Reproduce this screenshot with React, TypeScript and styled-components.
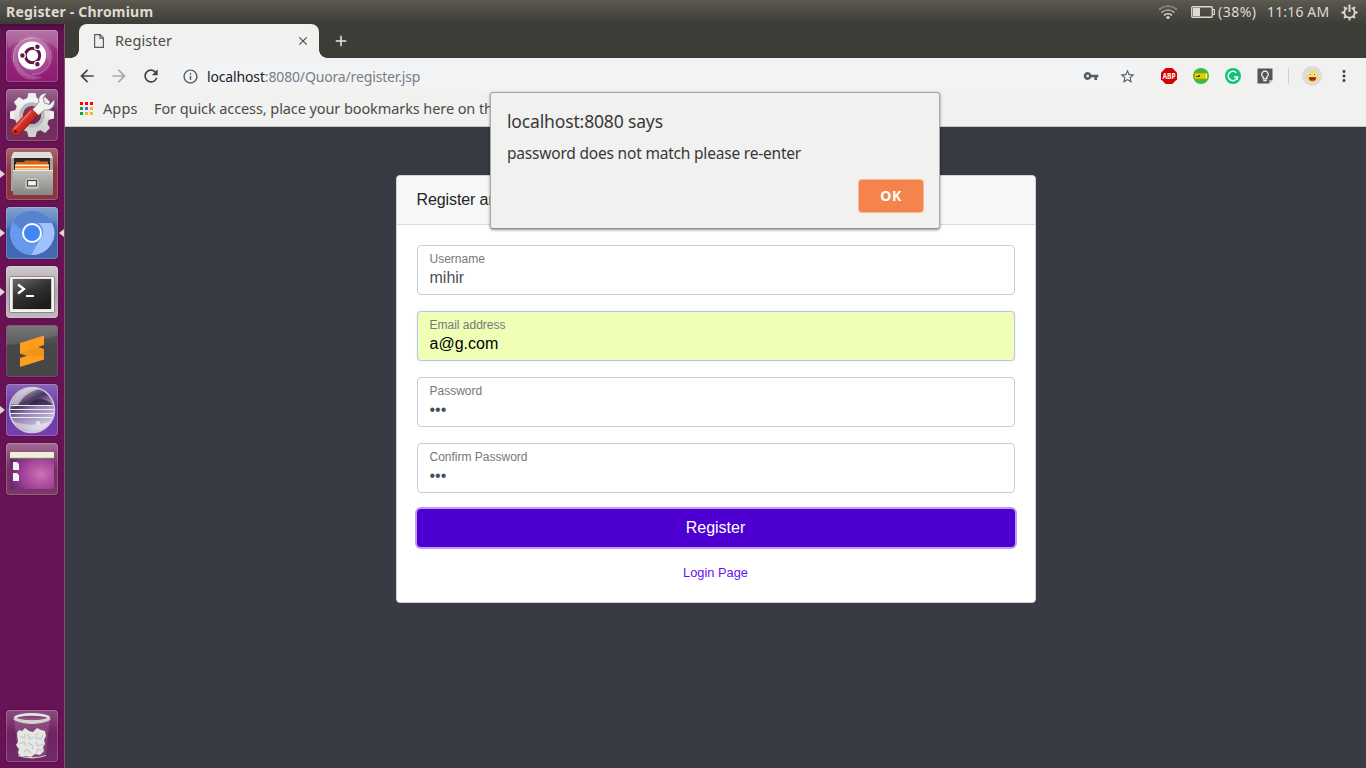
import React from 'react';
import styled, { createGlobalStyle, css } from 'styled-components';
import {
  MdArrowBack,
  MdArrowForward,
  MdRefresh,
  MdInfoOutline,
  MdVpnKey,
  MdStarBorder,
  MdMoreVert,
  MdClose,
  MdAdd,
} from 'react-icons/md';

const GlobalStyle = createGlobalStyle`
  * { box-sizing: border-box; }
  html, body { margin: 0; padding: 0; overflow: hidden; }
  body { font-family: 'Noto Sans', 'Open Sans', sans-serif; }
`;

const Desktop = styled.div`
  width: 1366px;
  height: 768px;
  display: flex;
  flex-direction: column;
  overflow: hidden;
  background: #383a44;
`;

/* ---------- system panel ---------- */

const Panel = styled.header`
  height: 24px;
  flex: none;
  display: flex;
  align-items: center;
  justify-content: space-between;
  padding: 0 8px 0 6px;
  background: linear-gradient(#5f5d50 0, #59564e 2px, #3d3c37 100%);
  color: #dfdbd2;
`;

const Label = styled.span<{ $size?: number; $track?: number; $color?: string; $weight?: number }>`
  white-space: nowrap;
  line-height: 20px;
  font-size: ${(p) => p.$size ?? 14}px;
  letter-spacing: ${(p) => p.$track ?? 0}px;
  font-weight: ${(p) => p.$weight ?? 400};
  ${(p) => p.$color && css`color: ${p.$color};`}
`;

const Indicators = styled.div`
  display: flex;
  align-items: center;
  svg { display: block; }
`;

const Battery = styled.div`
  display: flex;
  align-items: center;
  gap: 3px;
  width: 66px;
  margin: 0 10px 0 13px;
`;

const Clock = styled.div`
  width: 63px;
  margin-right: 11px;
  display: flex;
`;

/* ---------- launcher ---------- */

const Body = styled.div`
  flex: 1;
  min-height: 0;
  display: flex;
`;

const Launcher = styled.nav`
  width: 65px;
  flex: none;
  display: flex;
  flex-direction: column;
  justify-content: space-between;
  padding: 6px 0;
  background: linear-gradient(#470c3b 0, #65114f 7px, #691255 70px, #671355 100%);
  border-right: 1px solid #8a4a7c;
`;

const LauncherGroup = styled.div`
  display: flex;
  flex-direction: column;
  gap: 7px;
`;

const LauncherSlot = styled.div`
  height: 52px;
  display: grid;
  grid-template-columns: 6px 52px 6px;
  align-items: center;
`;

const Pip = styled.i<{ $side: 'left' | 'right'; $on?: boolean }>`
  width: 5px;
  height: 8px;
  justify-self: ${(p) => (p.$side === 'left' ? 'start' : 'end')};
  background: ${(p) => (p.$on ? '#ddd5da' : 'transparent')};
  clip-path: ${(p) =>
    p.$side === 'left' ? 'polygon(0 0, 100% 50%, 0 100%)' : 'polygon(100% 0, 0 50%, 100% 100%)'};
`;

const Tile = styled.div<{ $bg: string; $edge?: string }>`
  width: 52px;
  height: 52px;
  border-radius: 4px;
  overflow: hidden;
  background: ${(p) => p.$bg};
  box-shadow: inset 0 0 0 1px ${(p) => p.$edge ?? 'rgba(255,255,255,.2)'}, 0 0 2px rgba(30, 0, 25, 0.5);
  svg { display: block; }
`;

/* ---------- browser ---------- */

const Browser = styled.main`
  position: relative;
  flex: 1;
  min-width: 0;
  display: flex;
  flex-direction: column;
`;

const TabStrip = styled.div`
  height: 34px;
  flex: none;
  display: flex;
  align-items: center;
  padding-left: 14px;
  background: #3d3d38;
`;

const Tab = styled.div`
  position: relative;
  width: 240px;
  height: 34px;
  display: flex;
  align-items: center;
  padding: 0 9px 0 15px;
  background: #f1f1ef;
  border-radius: 8px 8px 0 0;
  color: #4b4b4b;
  &::before, &::after {
    content: '';
    position: absolute;
    bottom: 0;
    width: 8px;
    height: 8px;
  }
  &::before {
    left: -8px;
    background: radial-gradient(circle at 0 0, transparent 7.5px, #f1f1ef 8px);
  }
  &::after {
    right: -8px;
    background: radial-gradient(circle at 100% 0, transparent 7.5px, #f1f1ef 8px);
  }
`;

const TabTitle = styled.div`
  flex: 1;
  margin-left: 11px;
  padding-bottom: 2px;
  display: flex;
`;

const NewTab = styled.div`
  margin-left: 13px;
  display: flex;
  color: #e8e8e4;
`;

const Toolbar = styled.div`
  height: 37px;
  flex: none;
  display: flex;
  align-items: center;
  padding: 0 0 1px 12px;
  background: #f1f1ef;
  color: #444;
  svg { display: block; flex: none; }
`;

const NavButtons = styled.div`
  display: flex;
  gap: 12px;
  width: 97px;
`;

const Omnibox = styled.div`
  width: 970px;
  height: 28px;
  display: flex;
  align-items: center;
  padding: 0 8px 0 8px;
  border-radius: 14px;
  background: #f1f3f5;
  color: #5a5e63;
`;

const Url = styled.div`
  flex: 1;
  margin-left: 8px;
  padding-top: 2px;
  display: flex;
`;

const OmniActions = styled.div`
  display: flex;
  align-items: center;
  gap: 20px;
`;

const Extensions = styled.div`
  display: flex;
  align-items: center;
  gap: 16px;
  margin-left: 17px;
`;

const Divider = styled.div`
  width: 1px;
  height: 16px;
  margin: 0 13px 0 15px;
  background: #cfcfcd;
`;

const Avatar = styled.div`
  width: 20px;
  height: 20px;
  border-radius: 50%;
  display: grid;
  place-items: center;
  background: #dcdcdc;
  margin-right: 13px;
`;

const Bookmarks = styled.div`
  height: 32px;
  flex: none;
  display: flex;
  align-items: center;
  padding: 0 0 5px 15px;
  background: #f1f1ef;
  border-bottom: 1px solid #c4c5c4;
  color: #4b4b4b;
  > span, div > span { margin-bottom: 1px; }
`;

const AppsLink = styled.div`
  width: 74px;
  display: flex;
  align-items: center;
  gap: 10px;
`;

/* ---------- page ---------- */

const Page = styled.section`
  flex: 1;
  min-height: 0;
  display: flex;
  flex-direction: column;
  align-items: center;
  padding-top: 48px;
  background: #383a44;
  font-family: 'Liberation Sans', Arial, sans-serif;
`;

const Card = styled.div`
  width: 640px;
  height: 428px;
  background: #fff;
  border: 1px solid #d3d3d5;
  border-radius: 4px;
  overflow: hidden;
`;

const CardHeader = styled.div`
  height: 49px;
  padding: 12px 20px;
  line-height: 24px;
  font-size: 16px;
  letter-spacing: -0.1px;
  color: #212529;
  background: #f7f7f7;
  border-bottom: 1px solid #dadada;
`;

const Form = styled.form`
  padding: 20px;
  display: flex;
  flex-direction: column;
  gap: 16px;
`;

const Field = styled.label<{ $filled?: boolean }>`
  height: 50px;
  display: flex;
  flex-direction: column;
  padding: 4px 12px 0;
  border: 1px solid ${(p) => (p.$filled ? '#bcc3e6' : '#c9cdd8')};
  border-radius: 4px;
  background: ${(p) => (p.$filled ? '#efffb5' : '#fff')};
  box-shadow: ${(p) => (p.$filled ? '0 0 2px #dfe2f5' : 'none')};
  color: ${(p) => (p.$filled ? '#000' : '#495057')};
`;

const FieldName = styled.span`
  font-size: 12px;
  line-height: 18px;
  color: #777;
`;

const FieldInput = styled.input`
  border: 0;
  padding: 0;
  margin: 0;
  height: 20px;
  outline: 0;
  background: transparent;
  color: inherit;
  font: 16px 'Liberation Sans', Arial, sans-serif;
`;

const Submit = styled.button`
  height: 38px;
  border: 0;
  border-radius: 4px;
  background: #4d00d1;
  box-shadow: 0 0 0 2px #c19cf6;
  color: #fff;
  font: 16px 'Liberation Sans', Arial, sans-serif;
`;

const LoginLink = styled.a`
  align-self: center;
  font-size: 12.8px;
  line-height: 20px;
  color: #6b0ff5;
`;

/* ---------- dialog ---------- */

const Dialog = styled.div`
  position: absolute;
  top: 68px;
  left: 425px;
  width: 450px;
  height: 137px;
  display: flex;
  flex-direction: column;
  padding: 18px 15px 15px 16px;
  background: #f1f1ef;
  border: 1px solid #a9a9a7;
  border-bottom-color: #8f8f8d;
  border-radius: 3px;
  box-shadow: 0 1px 3px rgba(0, 0, 0, 0.45);
  color: #3a373b;
`;

const DialogText = styled.div`
  margin-top: 12px;
  flex: 1;
  display: flex;
`;

const OkButton = styled.button`
  align-self: flex-end;
  width: 66px;
  height: 34px;
  border: 1px solid #f7b898;
  border-radius: 4px;
  background: #f5834c;
  color: #fff;
  font: 700 14px 'Noto Sans', sans-serif;
  letter-spacing: 0.5px;
  padding: 0 0 2px;
`;

/* ---------- drawings ---------- */

const Art = ({ children }: { children: React.ReactNode }) => (
  <svg width="52" height="52" viewBox="0 0 52 52">
    {children}
  </svg>
);

const DashArt = () => (
  <Art>
    <defs>
      <radialGradient id="dashGlow" cx=".5" cy=".5" r=".6">
        <stop offset="0" stopColor="#d6a0c8" stopOpacity=".75" />
        <stop offset="1" stopColor="#d6a0c8" stopOpacity="0" />
      </radialGradient>
    </defs>
    <path d="M0 0h52v20C40 8 22 4 2 18z" fill="#fff" opacity=".14" />
    <path d="M7 28C6 12 22 3 34 9c9 4 12 14 8 24-1-12-8-18-17-18-10 0-14 6-14 14 2 12 12 18 26 18C20 55 8 44 7 28z" fill="#fff" opacity=".2" />
    <circle cx="26" cy="26" r="21" fill="url(#dashGlow)" />
    <path d="M8 32C5 16 17 8 27 8M44 20c4 15-7 25-18 24" fill="none" stroke="#fff" strokeOpacity=".3" />
    <circle cx="26" cy="25.500" r="14" fill="#fff" />
    <circle cx="26.500" cy="25.500" r="7.200" fill="none" stroke="#60154f" strokeWidth="3" />
    <g stroke="#fff" strokeWidth="1.300" fill="#60154f">
      <circle cx="16.400" cy="25.500" r="2.900" />
      <circle cx="31.400" cy="16.800" r="2.900" />
      <circle cx="31.400" cy="34.200" r="2.900" />
    </g>
  </Art>
);

const gearTeeth = [0, 45, 90, 135, 180, 225, 270, 315];

const SettingsArt = () => (
  <Art>
    <defs>
      <linearGradient id="gear" x1="0" y1="0" x2="0" y2="1">
        <stop offset="0" stopColor="#f4f4f4" />
        <stop offset="1" stopColor="#cfcfcf" />
      </linearGradient>
      <linearGradient id="handle" x1="0" y1="0" x2="1" y2="1">
        <stop offset=".3" stopColor="#e8473c" />
        <stop offset=".7" stopColor="#b51a14" />
      </linearGradient>
    </defs>
    {gearTeeth.map((a) => (
      <path key={a} d="M21 10l1.500-6h7l1.500 6z" transform={`rotate(${a} 26 26)`} fill={a > 90 && a < 270 ? '#d2d2d2' : '#eeeeee'} />
    ))}
    <circle cx="26" cy="26" r="13.500" fill="none" stroke="url(#gear)" strokeWidth="8" />
    <circle cx="26" cy="26" r="11" fill="none" stroke="#b9b9bb" strokeWidth="3.500" />
    <path d="M26 21l7-8c-1.500-5 2-9 8-9l-4 5 1.500 5 5 1.500 5-5c1 7-4 11.500-10 10.500l-7 6z" fill="#f2f2f2" stroke="#77737a" strokeWidth=".8" />
    <path d="M25 19.500l7 6.500-19 20c-5 2-9-2-7-7z" fill="url(#handle)" stroke="#8e1511" strokeWidth=".7" />
    <path d="M25 22L8.500 40" stroke="#f07468" strokeWidth="1.200" />
    <circle cx="9.500" cy="42.500" r="1.500" fill="#5d100d" />
  </Art>
);

const FilesArt = () => (
  <Art>
    <defs>
      <linearGradient id="cab" x1="0" y1="0" x2="0" y2="1">
        <stop offset="0" stopColor="#c2c2c0" />
        <stop offset="1" stopColor="#868683" />
      </linearGradient>
    </defs>
    <path d="M7 5q0-1 2-1h34q2 0 2 1l2 5v33H5V10z" fill="#dededc" />
    <path d="M5 10h42v33H5z" fill="#a3a3a1" />
    <path d="M8 10h36v12H8z" fill="#33261f" />
    <path d="M10 14h8l1-1.500h14l1 1h8v9H10z" fill="#cf6420" />
    <path d="M9 16.500h34V18H9z" fill="#fff1dc" />
    <path d="M9 18h34v4H9z" fill="#f08a35" />
    <path d="M9 20h34v1.500H9z" fill="#fbd9a8" />
    <rect x="7" y="22" width="40" height="25" rx="1" fill="url(#cab)" />
    <path d="M7 22.500h40" stroke="#e9e9e7" />
    <rect x="19" y="30" width="14" height="11" rx="2.500" fill="#cfcfcd" stroke="#a0a09e" strokeWidth=".8" />
    <rect x="21.500" y="32.500" width="9" height="5.500" fill="#f4f4f3" stroke="#444" strokeWidth="1.200" />
  </Art>
);

const ChromiumArt = () => (
  <Art>
    <path d="M0 0h52v16Q26 8 0 22z" fill="#fff" opacity=".1" />
    <circle cx="26" cy="26" r="22" fill="#6094e8" />
    <path d="M26 4a22 22 0 0 1 20 12H26a10 10 0 0 0-9.500 7L7 15A22 22 0 0 1 26 4z" fill="#5583d0" />
    <path d="M46 16a22 22 0 0 1-21 32l9.500-16.500A10 10 0 0 0 32 16z" fill="#a0c1fa" />
    <path d="M7 15a22 22 0 0 0 18 33l6-11a10 10 0 0 1-13-5z" fill="#6799ee" />
    <circle cx="26" cy="26" r="10" fill="#fff" />
    <circle cx="26" cy="26" r="8" fill="#4285f4" />
  </Art>
);

const TerminalArt = () => (
  <Art>
    <defs>
      <linearGradient id="term" x1="0" y1="0" x2=".6" y2="1">
        <stop offset="0" stopColor="#6a6a6a" />
        <stop offset=".5" stopColor="#333" />
        <stop offset="1" stopColor="#1c1c1c" />
      </linearGradient>
    </defs>
    <rect x="3.500" y="10.500" width="45" height="36" rx="1.500" fill="#f4f4f2" stroke="#8d8a8c" />
    <rect x="6" y="12.500" width="40" height="31" fill="#c9c9c7" />
    <rect x="7" y="13" width="38" height="30" fill="url(#term)" />
    <path d="M12 18.500l6 4.500-6 4.500" fill="none" stroke="#fff" strokeWidth="2.300" />
    <path d="M20 30h8" stroke="#fff" strokeWidth="2" />
  </Art>
);

const SublimeArt = () => (
  <Art>
    <path d="M0 0h52v10Q26 18 0 20z" fill="#fff" opacity=".1" />
    <path d="M38 10.500L14 18v10.500l7 2.300-7 2.200v9l24-7.500V24l-6-2 6-2z" fill="#ff9d1f" />
    <path d="M14 28l16-5.500 8 2.500v6.500L21 30.800z" fill="#f2931c" />
  </Art>
);

const EclipseArt = () => (
  <Art>
    <defs>
      <linearGradient id="ecl" x1=".1" y1="0" x2=".6" y2="1">
        <stop offset="0" stopColor="#dcd6e4" />
        <stop offset=".38" stopColor="#46355c" />
        <stop offset=".55" stopColor="#8d7cab" />
        <stop offset="1" stopColor="#d9d2ea" />
      </linearGradient>
    </defs>
    <circle cx="26" cy="26" r="22.500" fill="url(#ecl)" stroke="#cfc8dc" strokeWidth="1.500" />
    <path d="M5 20C12 4 26 2 34 5 18 9 16 16 12 21z" fill="#fff" opacity=".5" />
    <path d="M22 21C30 12 40 14 47 21z" fill="#1d1233" opacity=".65" />
    <path d="M5 21.500h42M4 25.500h44M4 29.500h44M5 33.500h42" stroke="#efeaf8" strokeWidth="1.200" />
    <path d="M6 36c6 12 32 14 40 0-8 6-32 6-40 0z" fill="#fff" opacity=".35" />
    <circle cx="32" cy="39" r="2.200" fill="#fff" opacity=".6" />
  </Art>
);

const DesktopArt = () => (
  <Art>
    <defs>
      <radialGradient id="wall" cx=".7" cy=".6" r=".8">
        <stop offset="0" stopColor="#cf73b6" />
        <stop offset=".5" stopColor="#a3429a" />
        <stop offset="1" stopColor="#5d2269" />
      </radialGradient>
    </defs>
    <rect x="4" y="9" width="44" height="37" rx="1.500" fill="url(#wall)" />
    <path d="M4 10q0-1 1-1h42q1 0 1 1v5H4z" fill="#f0efdc" />
    <path d="M4 15.300h44" stroke="#77864a" />
    <path d="M7 19h4l2 2v6H7zM7 30h4l2 2v6H7z" fill="#f2f0f2" />
  </Art>
);

const TrashArt = () => (
  <Art>
    <path d="M8 8l4 37q14 5 28 0l4-37z" fill="#fff" opacity=".13" />
    <path d="M11 23l2-3 3 1 3-3 4 3 4 1 4-4 4 2 4 1 1 5-2 4 1 4-2 3 1 4-4 4-5-1-4 3-5-1-5 1-3-4 1-4-3-4 2-3z" fill="#e6e7e5" />
    <path d="M14 26l4 2 1-4M22 24l2 5 4-2M31 23l-1 5 5 1 2-4M13 34l5-2 2 4M22 33l4 2 1 4M30 32l2 4 5-2M18 42l3-3 4 4M30 43l2-4 4 2" fill="none" stroke="#c3c6c2" strokeWidth="1.200" />
    <path d="M12 45.500q14 4.500 28 0" fill="none" stroke="#cbcbcb" strokeWidth="1.300" />
    <ellipse cx="26" cy="8" rx="17" ry="3.600" fill="none" stroke="#e3e3e1" strokeWidth="2.600" />
    <path d="M8 8.500q18 8.500 36 0" fill="none" stroke="#d0d0ce" strokeWidth="2.600" />
  </Art>
);

const WifiIcon = () => (
  <svg width="20" height="16" viewBox="0 0 20 16" fill="none" strokeWidth="1.600">
    <path d="M1 5.500Q10-1.500 19 5.500" stroke="#8f8c84" />
    <path d="M3.500 8.500Q10 3.500 16.500 8.500" stroke="#a8a59c" />
    <path d="M6 11.300Q10 8.300 14 11.300" stroke="#dfdbd2" />
    <path d="M7.800 13q2.200-1.600 4.400 0L10 15.400z" fill="#dfdbd2" />
  </svg>
);

const BatteryIcon = () => (
  <svg width="24" height="12" viewBox="0 0 24 12">
    <rect x=".75" y=".75" width="20.500" height="10.500" rx="1" fill="none" stroke="#dfdbd2" strokeWidth="1.300" />
    <path d="M21.500 3.500h1.800v5h-1.800" fill="none" stroke="#dfdbd2" strokeWidth="1.200" />
    <rect x="2" y="2" width="7" height="8" fill="#dfdbd2" />
  </svg>
);

const SessionIcon = () => (
  <svg width="17" height="17" viewBox="0 0 17 17" fill="none" stroke="#dfdbd2" strokeWidth="1.800">
    <path d="M6.300 3.800a5.200 5.200 0 1 0 4.400 0" />
    <path d="M8.500.5v7.500" strokeWidth="2" />
    <path d="M8.500 13.500v3M.5 8.500h3M13.500 8.500h3M3 3l2 2M14 3l-2 2M3 14l2-2M14 14l-2-2" />
  </svg>
);

const PageIcon = () => (
  <svg width="10" height="14" viewBox="0 0 10 14" fill="none" stroke="#5a5a5a" strokeWidth="1.200">
    <path d="M.6.6h5.600l3.200 3.300v9.500H.6z" />
    <path d="M6 .8v3.400h3.300" />
  </svg>
);

const AppsIcon = () => {
  const colors = ['#f01', '#f01', '#f01', '#00a651', '#5858ff', '#fdb813', '#00a651', '#fdb813', '#fdb813'];
  return (
    <svg width="13" height="13" viewBox="0 0 13 13">
      {colors.map((c, i) => (
        <rect key={i} x={(i % 3) * 5} y={Math.floor(i / 3) * 5} width="3" height="3" fill={c} />
      ))}
    </svg>
  );
};

const AdBlockIcon = () => (
  <svg width="16" height="16" viewBox="0 0 16 16">
    <path d="M4.700 0h6.600L16 4.700v6.600L11.300 16H4.700L0 11.300V4.700z" fill="#d40000" />
    <text x="8" y="10.900" textAnchor="middle" textLength="13" lengthAdjust="spacingAndGlyphs" fontFamily="Noto Sans" fontWeight="700" fontSize="8" fill="#fff">ABP</text>
  </svg>
);

const TicketIcon = () => (
  <svg width="16" height="16" viewBox="0 0 16 16">
    <circle cx="8" cy="8" r="8" fill="#3fb93f" />
    <rect x="1.500" y="5" width="12.500" height="6" fill="#e6cf00" stroke="#a69a00" strokeWidth=".6" />
    <path d="M3 8.500h4M5 7.500h2" stroke="#5c5600" />
    <path d="M13.500 5.500v5" stroke="#fff6a0" strokeWidth="1.400" />
  </svg>
);

const GrammarIcon = () => (
  <svg width="16" height="16" viewBox="0 0 16 16">
    <circle cx="8" cy="8" r="8" fill="#0fc477" />
    <path d="M11.300 4.700A4.700 4.700 0 1 0 12.500 9H9.200" fill="none" stroke="#fff" strokeWidth="1.400" />
    <path d="M12.500 8.800v3" stroke="#fff" strokeWidth="1.200" />
  </svg>
);

const NoteIcon = () => (
  <svg width="16" height="16" viewBox="0 0 16 16">
    <path d="M.5.500h15V12L12 15.500H.5z" fill="#565656" />
    <path d="M15.500 12L12 15.500V12z" fill="#b5b5b5" />
    <path d="M6.300 9.300a3.300 3.300 0 1 1 3.400 0v1.500H6.300z" fill="none" stroke="#fff" strokeWidth="1.200" />
    <path d="M6.300 12.700h3.400" stroke="#fff" strokeWidth="1.200" />
  </svg>
);

const FaceIcon = () => (
  <svg width="13" height="13" viewBox="0 0 13 13">
    <circle cx="6.500" cy="6.500" r="6" fill="#f6df4e" />
    <circle cx="4" cy="4.200" r="1.500" fill="#fff" />
    <circle cx="9" cy="4.200" r="1.500" fill="#fff" />
    <circle cx="4.200" cy="4.400" r=".7" fill="#333" />
    <circle cx="8.800" cy="4.400" r=".7" fill="#333" />
    <path d="M2.800 7.300h7.400q-.6 4-3.700 4t-3.700-4z" fill="#8c1c1c" />
    <path d="M4.700 10q1.800-1 3.600 0-1.800 1.800-3.600 0z" fill="#f0606a" />
  </svg>
);

type App = { name: string; art: React.ReactNode; bg: string; edge?: string; running?: boolean; focused?: boolean };

const apps: App[] = [
  { name: 'dash', art: <DashArt />, bg: 'linear-gradient(#ab5e97, #932a7b 45%, #8f1a74)' },
  { name: 'settings', art: <SettingsArt />, bg: 'linear-gradient(#9c6690, #6f2a60 50%, #75305f)' },
  { name: 'files', art: <FilesArt />, bg: 'linear-gradient(#a8656b, #8c3440 45%, #8b3540)', running: true },
  { name: 'chromium', art: <ChromiumArt />, bg: 'linear-gradient(#7397ce, #3e66ae 45%, #4369b2)', running: true, focused: true },
  { name: 'terminal', art: <TerminalArt />, bg: 'linear-gradient(#cfc8cd, #aea3ab 50%, #c0b7be)', running: true },
  { name: 'sublime', art: <SublimeArt />, bg: 'linear-gradient(#6b6b6b, #474747 40%, #454545)', edge: '#83406f' },
  { name: 'eclipse', art: <EclipseArt />, bg: 'linear-gradient(#8d63b8, #6d3aa5 45%, #7540ad)', running: true },
  { name: 'desktop', art: <DesktopArt />, bg: 'linear-gradient(#a06a94, #73305f 50%, #7b3768)' },
];

const fields = [
  { label: 'Username', value: 'mihir', type: 'text' },
  { label: 'Email address', value: 'a@g.com', type: 'text', filled: true },
  { label: 'Password', value: '123', type: 'password' },
  { label: 'Confirm Password', value: '124', type: 'password' },
];

const LauncherItem = ({ app }: { app: App }) => (
  <LauncherSlot>
    <Pip $side="left" $on={app.running} />
    <Tile $bg={app.bg} $edge={app.edge}>{app.art}</Tile>
    <Pip $side="right" $on={app.focused} />
  </LauncherSlot>
);

export default function App() {
  return (
    <Desktop>
      <GlobalStyle />
      <Panel>
        <Label $weight={700} $size={14} $track={0.2}>Register - Chromium</Label>
        <Indicators>
          <WifiIcon />
          <Battery>
            <BatteryIcon />
            <Label $size={14} $track={0.5}>(38%)</Label>
          </Battery>
          <Clock>
            <Label $size={14} $track={0.15}>11:16 AM</Label>
          </Clock>
          <SessionIcon />
        </Indicators>
      </Panel>
      <Body>
        <Launcher>
          <LauncherGroup>
            {apps.map((a) => (
              <LauncherItem key={a.name} app={a} />
            ))}
          </LauncherGroup>
          <LauncherItem app={{ name: 'trash', art: <TrashArt />, bg: 'linear-gradient(#8c4c80, #6f2162 45%, #742a67)' }} />
        </Launcher>
        <Browser>
          <TabStrip>
            <Tab>
              <PageIcon />
              <TabTitle>
                <Label $size={14.5} $track={0.1}>Register</Label>
              </TabTitle>
              <MdClose size={14} />
            </Tab>
            <NewTab>
              <MdAdd size={18} />
            </NewTab>
          </TabStrip>
          <Toolbar>
            <NavButtons>
              <MdArrowBack size={20} />
              <MdArrowForward size={20} color="#a9a9a9" />
              <MdRefresh size={20} />
            </NavButtons>
            <Omnibox>
              <MdInfoOutline size={17} />
              <Url>
                <Label $size={14} $track={-0.15} $color="#222">localhost</Label>
                <Label $size={14} $track={-0.15} $color="#7b7e82">:8080/Quora/register.jsp</Label>
              </Url>
              <OmniActions>
                <MdVpnKey size={16} />
                <MdStarBorder size={17} />
              </OmniActions>
            </Omnibox>
            <Extensions>
              <AdBlockIcon />
              <TicketIcon />
              <GrammarIcon />
              <NoteIcon />
            </Extensions>
            <Divider />
            <Avatar>
              <FaceIcon />
            </Avatar>
            <MdMoreVert size={18} />
          </Toolbar>
          <Bookmarks>
            <AppsLink>
              <AppsIcon />
              <Label $size={14.5} $track={0.1}>Apps</Label>
            </AppsLink>
            <Label $size={14.5} $track={-0.09}>For quick access, place your bookmarks here on the</Label>
          </Bookmarks>
          <Page>
            <Card>
              <CardHeader>Register an Account</CardHeader>
              <Form>
                {fields.map((f) => (
                  <Field key={f.label} $filled={f.filled}>
                    <FieldName>{f.label}</FieldName>
                    <FieldInput type={f.type} defaultValue={f.value} />
                  </Field>
                ))}
                <Submit type="button">Register</Submit>
                <LoginLink>Login Page</LoginLink>
              </Form>
            </Card>
          </Page>
          <Dialog>
            <Label $size={17.5} $track={-0.15}>localhost:8080 says</Label>
            <DialogText>
              <Label $size={15.5} $track={-0.2}>password does not match please re-enter</Label>
            </DialogText>
            <OkButton>OK</OkButton>
          </Dialog>
        </Browser>
      </Body>
    </Desktop>
  );
}
